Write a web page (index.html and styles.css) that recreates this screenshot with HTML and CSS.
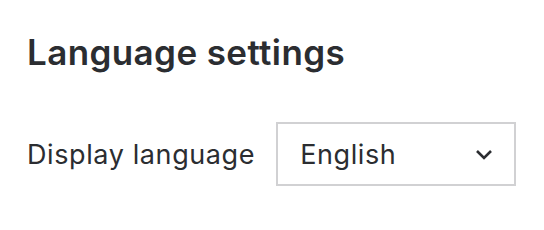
FILE: index.html
```html
<!DOCTYPE html>
<html lang="en">
<head>
    <meta charset="UTF-8">
    <title>Language settings</title>
    <link rel="stylesheet" href="styles.css">
</head>
<body>
    <div class="settings">
        <h2>Language settings</h2>
        <div class="form-row">
            <label for="display-language">Display language</label>
            <div class="select-wrap">
                <select id="display-language" name="display-language">
                    <option value="en">English</option>
                </select>
                <svg class="chevron" width="18" height="11" viewBox="0 0 18 11">
                    <path d="M2 2 L9 9 L16 2" fill="none" stroke="#2b2d31" stroke-width="2.6"/>
                </svg>
            </div>
        </div>
    </div>
</body>
</html>
```

FILE: styles.css
```css
body {
    margin: 0;
    background: #fff;
    font-family: Inter, "Noto Sans", sans-serif;
    color: #2b2d31;
}

.settings {
    padding: 32px 27px;
}

h2 {
    margin: 0 0 50px 0;
    font-size: 35px;
    font-weight: 600;
    line-height: 40px;
    letter-spacing: 0.4px;
    white-space: nowrap;
}

.form-row {
    display: flex;
    align-items: center;
    gap: 21px;
}

label {
    font-size: 27px;
    letter-spacing: 0.6px;
    white-space: nowrap;
}

.select-wrap {
    position: relative;
    flex-shrink: 0;
}

select {
    appearance: none;
    -webkit-appearance: none;
    width: 240px;
    height: 64px;
    padding: 0 22px;
    border: 2px solid #d1d1d3;
    border-radius: 0;
    background: #fff;
    font-family: inherit;
    font-size: 27px;
    letter-spacing: 0.6px;
    color: #2b2d31;
}

.chevron {
    position: absolute;
    right: 23px;
    top: 27px;
    pointer-events: none;
}
```
